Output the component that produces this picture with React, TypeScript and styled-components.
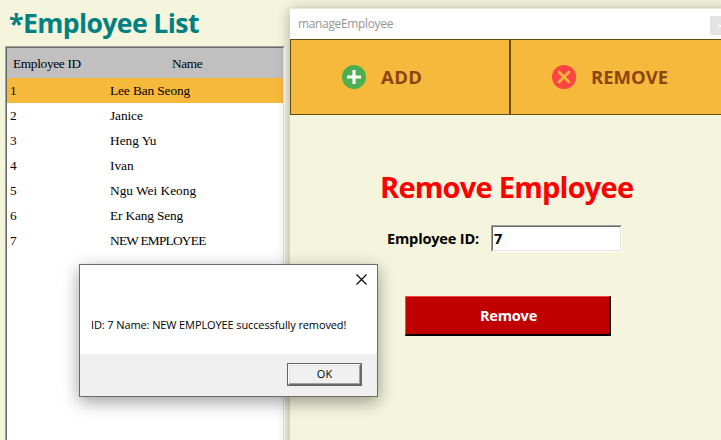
import React from "react";
import styled, { createGlobalStyle } from "styled-components";

const GlobalStyle = createGlobalStyle`
  * { box-sizing: border-box; }
  html, body { margin: 0; padding: 0; overflow: hidden; background: #f5f4dc; }
  button, input { margin: 0; border-radius: 0; outline: none; }
`;

const sans = `"Open Sans", "Noto Sans", sans-serif`;

const Desktop = styled.main`
  position: relative;
  width: 721px;
  height: 440px;
  display: flex;
  overflow: hidden;
  background: #f5f4dc;
  font-family: ${sans};
  white-space: nowrap;
`;

const ListPanel = styled.section`
  width: 290px;
  flex: none;
  padding-left: 5px;
`;

const ListTitle = styled.h1`
  margin: 0;
  height: 46px;
  padding: 4px 0 0 4px;
  font-size: 26.6px;
  line-height: 39px;
  font-weight: 700;
  letter-spacing: -0.6px;
  color: #008080;
`;

const TableFrame = styled.div`
  width: 280px;
  height: 420px;
  border: 1px solid;
  border-color: #a0a0a0 #fff #fff #a0a0a0;
`;

const Table = styled.div`
  height: 100%;
  border: 1px solid;
  border-color: #696969 #e3e3e3 #e3e3e3 #696969;
  background: #fff;
  color: #000;
  font: 13.33px/25px "Liberation Serif", serif;
`;

const HeaderRow = styled.div`
  display: grid;
  grid-template-columns: 100px 1fr;
  height: 30px;
  line-height: 32px;
  background: #c0c0c0;
`;

const HeaderCell = styled.span<{ $inset: number; $tracking?: number }>`
  padding-left: ${(p) => p.$inset}px;
  letter-spacing: ${(p) => p.$tracking ?? 0}px;
`;

const Row = styled.div<{ $selected?: boolean }>`
  display: grid;
  grid-template-columns: 100px 1fr;
  height: 25px;
  padding-left: 3px;
  background: ${(p) => (p.$selected ? "#f6b93b" : "#fff")};
`;

const NameCell = styled.span<{ $tracking: number }>`
  letter-spacing: ${(p) => p.$tracking}px;
`;

const Window = styled.section`
  position: relative;
  flex: none;
  width: 441px;
  height: 460px;
  margin-top: 8px;
  border-top: 1px solid #e9e8d2;
  background: #f5f4dc;
  box-shadow: 0 2px 13px rgba(0, 0, 0, 0.3);
`;

const TitleBar = styled.header`
  display: flex;
  justify-content: space-between;
  height: 30px;
  padding-left: 8px;
  background: #fff;
  color: #969696;
  font-size: 12px;
  line-height: 30px;
`;

const TitleText = styled.span`
  letter-spacing: -0.35px;
`;

const CloseStub = styled.span`
  width: 21px;
  height: 19px;
  margin-top: 7px;
  background: #e4e4e4;
  display: flex;
  align-items: center;
  padding-left: 7px;
`;

const Tabs = styled.nav`
  display: grid;
  grid-template-columns: 220px 221px;
  height: 76px;
`;

const Tab = styled.button<{ $inset: number }>`
  display: flex;
  align-items: center;
  gap: 15px;
  padding: 0 0 0 ${(p) => p.$inset}px;
  border: 1px solid #664a10;
  background: #f6b93b;
  color: #8b4513;
  font: 700 18.5px/24px ${sans};
`;

const TabLabel = styled.span<{ $tracking: number }>`
  letter-spacing: ${(p) => p.$tracking}px;
`;

const FormTitle = styled.h2`
  margin: 52px 0 0 90px;
  font-size: 29.1px;
  line-height: 40px;
  font-weight: 700;
  letter-spacing: -0.8px;
  color: #f00;
`;

const Field = styled.label`
  display: flex;
  height: 27px;
  margin: 18px 0 0 97px;
  font-size: 14.6px;
  line-height: 27px;
  font-weight: 700;
  color: #000;
`;

const FieldLabel = styled.span`
  width: 104px;
  letter-spacing: -0.2px;
`;

const Sunken = styled.span`
  display: flex;
  width: 131px;
  border: 1px solid;
  border-color: #a0a0a0 #fff #fff #a0a0a0;
`;

const IdInput = styled.input`
  width: 100%;
  border: 1px solid;
  border-color: #696969 #e3e3e3 #e3e3e3 #696969;
  padding: 0 0 1px 1px;
  background: #fff;
  color: #000;
  font: 700 14.6px/20px ${sans};
`;

const RemoveButton = styled.button`
  display: block;
  width: 206px;
  height: 40px;
  margin: 44px 0 0 115px;
  padding: 0 0 2px 2px;
  border: solid;
  border-width: 1px 2px 2px 1px;
  border-color: #f2494f #000 #000 #f2494f;
  background: #c00000;
  color: #fff;
  font: 700 14.6px/34px ${sans};
  letter-spacing: -0.25px;
`;

const Dialog = styled.div`
  position: absolute;
  left: 79px;
  top: 264px;
  width: 299px;
  height: 133px;
  display: flex;
  flex-direction: column;
  border: 1px solid #6c6c67;
  background: #fff;
  box-shadow: 0 5px 16px rgba(0, 0, 0, 0.38);
  color: #000;
  font-size: 11px;
`;

const DialogHead = styled.div`
  display: flex;
  justify-content: flex-end;
  height: 44px;
  padding: 9px 10px 0 0;
`;

const Message = styled.p`
  margin: 0;
  padding-left: 11px;
  height: 45px;
  line-height: 32px;
  letter-spacing: -0.11px;
`;

const DialogFoot = styled.div`
  flex: 1;
  display: flex;
  justify-content: flex-end;
  padding: 9px 15px 0 0;
  background: #f0f0f0;
`;

const OkFrame = styled.span`
  width: 75px;
  height: 23px;
  display: flex;
  border: 1px solid #646464;
`;

const OkButton = styled.button`
  flex: 1;
  padding: 0 0 1px;
  border: 1px solid;
  border-color: #fff #696969 #696969 #fff;
  box-shadow: inset -1px -1px #a0a0a0, inset 1px 1px #e3e3e3;
  background: #f0f0f0;
  color: #000;
  font: 11px/18px ${sans};
`;

const employees = [
  { name: "Lee Ban Seong", tracking: -0.1 },
  { name: "Janice", tracking: -0.1 },
  { name: "Heng Yu", tracking: 0 },
  { name: "Ivan", tracking: 0 },
  { name: "Ngu Wei Keong", tracking: 0 },
  { name: "Er Kang Seng", tracking: -0.15 },
  { name: "NEW EMPLOYEE", tracking: -0.75 },
];

const AddIcon = () => (
  <svg width="24" height="24" viewBox="0 0 24 24">
    <circle cx="12" cy="12" r="12" fill="#4caf50" />
    <path d="M12 5v14M5 12h14" stroke="#fff" strokeWidth="3.2" />
  </svg>
);

const RemoveIcon = () => (
  <svg width="24" height="24" viewBox="0 0 24 24">
    <circle cx="12" cy="12" r="12" fill="#ff4444" />
    <path d="M7 7l10 10M17 7L7 17" stroke="#f6b93b" strokeWidth="2.6" strokeLinecap="round" />
  </svg>
);

export default function App() {
  return (
    <>
      <GlobalStyle />
      <Desktop>
        <ListPanel>
          <ListTitle>*Employee List</ListTitle>
          <TableFrame>
            <Table>
              <HeaderRow>
                <HeaderCell $inset={6} $tracking={-0.33}>Employee ID</HeaderCell>
                <HeaderCell $inset={65} $tracking={-0.4}>Name</HeaderCell>
              </HeaderRow>
              {employees.map(({ name, tracking }, i) => (
                <Row key={name} $selected={i === 0}>
                  <span>{i + 1}</span>
                  <NameCell $tracking={tracking}>{name}</NameCell>
                </Row>
              ))}
            </Table>
          </TableFrame>
        </ListPanel>

        <Window>
          <TitleBar>
            <TitleText>manageEmployee</TitleText>
            <CloseStub>
              <svg width="6" height="6" viewBox="0 0 6 6">
                <path d="M.5.5l5 5M5.5.5l-5 5" stroke="#fafafa" />
              </svg>
            </CloseStub>
          </TitleBar>
          <Tabs>
            <Tab $inset={51}>
              <AddIcon />
              <TabLabel $tracking={0.4}>ADD</TabLabel>
            </Tab>
            <Tab $inset={41}>
              <RemoveIcon />
              <TabLabel $tracking={0}>REMOVE</TabLabel>
            </Tab>
          </Tabs>
          <FormTitle>Remove Employee</FormTitle>
          <Field>
            <FieldLabel>Employee ID:</FieldLabel>
            <Sunken>
              <IdInput defaultValue="7" />
            </Sunken>
          </Field>
          <RemoveButton>Remove</RemoveButton>
        </Window>

        <Dialog role="dialog">
          <DialogHead>
            <svg width="11" height="11" viewBox="0 0 11 11">
              <path d="M.5.5l10 10M10.5.5l-10 10" stroke="#000" strokeWidth="1.1" />
            </svg>
          </DialogHead>
          <Message>ID: 7 Name: NEW EMPLOYEE successfully removed!</Message>
          <DialogFoot>
            <OkFrame>
              <OkButton>OK</OkButton>
            </OkFrame>
          </DialogFoot>
        </Dialog>
      </Desktop>
    </>
  );
}
